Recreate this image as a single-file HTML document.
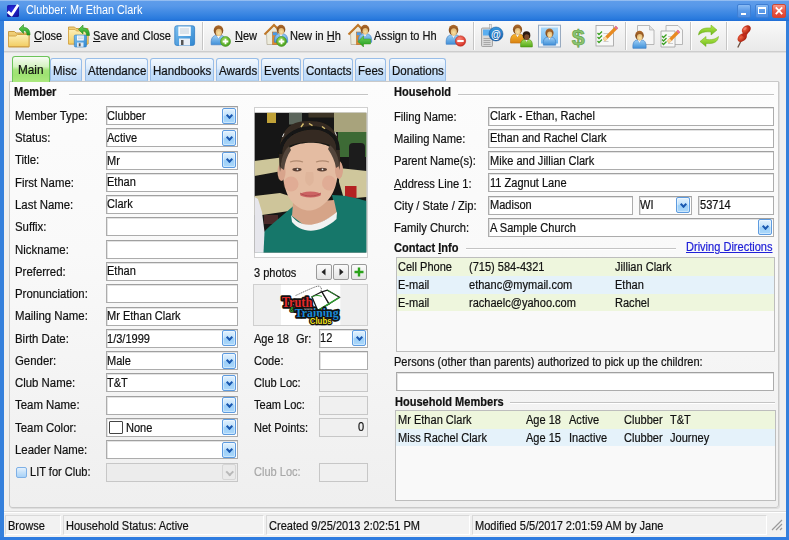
<!DOCTYPE html><html><head><meta charset="utf-8"><style>
*{margin:0;padding:0;box-sizing:border-box}
html,body{width:789px;height:540px;overflow:hidden;background:#f0f0f0}
body{position:relative;font-family:"Liberation Sans", sans-serif;font-size:12px;color:#111}
.t{position:absolute;line-height:12px;white-space:pre;transform:scaleX(.92);transform-origin:0 0;-webkit-text-stroke:0.2px currentColor}
.b{font-weight:bold}
.box{position:absolute}
.inp{position:absolute;background:#fff;border:1px solid #acacac;border-top-color:#a0a0a0;box-shadow:inset 1px 1px 0 #e3e3e3}
.dis{position:absolute;background:#f0f0f0;border:1px solid #c7c7c7}
.dd{position:absolute;width:14px;height:16px;border:1px solid #5d9be0;border-radius:2px;background:linear-gradient(#e3f2fe,#c2e2fb 45%,#9ccff8 55%,#acd8fa);box-shadow:inset 0 0 0 1px rgba(255,255,255,.4)}
.dd:after{content:"";position:absolute;left:4px;top:4px;width:3px;height:3px;border:solid #1a58b0;border-width:0 2px 2px 0;transform:rotate(45deg)}
.ddd{position:absolute;width:14px;height:16px;border:1px solid #d6d6d6;border-radius:2px;background:#eaeaea}
.ddd:after{content:"";position:absolute;left:3.5px;top:3.5px;width:3.5px;height:3.5px;border:solid #b8b8b8;border-width:0 2px 2px 0;transform:rotate(45deg)}
.tab{position:absolute;top:57.5px;height:23.5px;border:1px solid #98bde8;border-bottom:1px solid #b0d0f0;border-radius:3px 3px 0 0;background:linear-gradient(#f4f9fe,#dcebfb 45%,#c8e0f9 55%,#bcd9f8)}
.sep{position:absolute;top:22px;width:2px;height:28px;border-left:1px solid #c5c5c5;border-right:1px solid #fff}
.grp{position:absolute;height:2px;background:#c4c4c4;border-bottom:1px solid #fff}
.sb{position:absolute;top:515px;height:20px;border:1px solid #d9d9d9;border-right-color:#fff;border-bottom-color:#fff;background:#f2f2f2}
.ul{text-decoration:underline}
</style></head><body>

<div class="box" style="left:0;top:0;width:789px;height:21px;background:linear-gradient(#b8d4f6 0,#5e9cea 1.2px,#5798e9 6px,#3e88e3 13px,#2879dd 19px,#1f6cd4 21px)"></div>
<div class="box" style="left:0;top:21px;width:4px;height:519px;background:#3580dc"></div>
<div class="box" style="left:786px;top:21px;width:3px;height:519px;background:#3580dc"></div>
<div class="box" style="left:0;top:537px;width:789px;height:3px;background:#2f7ce0"></div>
<div class="box" style="left:7px;top:5px;width:11.5px;height:11.5px;background:radial-gradient(circle at 45% 40%,#2a2ee8,#1a1ab0 60%,#0e1080);border-radius:1.5px"></div>
<svg class="box" style="left:5px;top:3px" width="16" height="16"><path d="M2.8 8.6 L6.5 12 L13.2 1.8" stroke="#fff" stroke-width="2.8" fill="none" stroke-linejoin="round"/></svg>
<div class="t" style="left:25.5px;top:4.3px;color:#fff;font-size:12.2px;transform:scaleX(.89);-webkit-text-stroke:0">Clubber: Mr Ethan Clark</div>
<div class="box" style="left:737px;top:4px;width:14px;height:14px;border:1px solid #3f7fd4;border-radius:2px;background:linear-gradient(#8cbcf4,#5a9ae8 50%,#4a8ce4)"></div>
<div class="box" style="left:741px;top:13px;width:5px;height:2px;background:#fff"></div>
<div class="box" style="left:755px;top:4px;width:14px;height:14px;border:1px solid #3f7fd4;border-radius:2px;background:linear-gradient(#8cbcf4,#5a9ae8 50%,#4a8ce4)"></div>
<div class="box" style="left:758px;top:7px;width:8px;height:7px;border:1px solid #fff;border-top-width:2px"></div>
<div class="box" style="left:772px;top:4px;width:14px;height:14px;border:1px solid #c84a3a;border-radius:2px;background:linear-gradient(#f89888,#e85848 50%,#e04030)"></div>
<svg class="box" style="left:772px;top:4px" width="14" height="14"><path d="M3.8 3.3 L10.2 10.2 M10.2 3.3 L3.8 10.2" stroke="#fff" stroke-width="1.8"/></svg>
<div class="box" style="left:4px;top:21px;width:782px;height:30px;background:linear-gradient(#f9f9f9,#e9e9e9)"></div>
<div class="box" style="left:4px;top:51px;width:782px;height:2px;background:#cdcdcd;border-bottom:1px solid #e0e0e0"></div>
<div class="sep" style="left:202px"></div>
<div class="sep" style="left:473px"></div>
<div class="sep" style="left:625px"></div>
<div class="sep" style="left:690px"></div>
<div class="sep" style="left:726px"></div>
<svg width="0" height="0" style="position:absolute"><defs>
<linearGradient id="gFold" x1="0" y1="0" x2="0" y2="1"><stop offset="0" stop-color="#fdf0b8"/><stop offset="1" stop-color="#f2cd62"/></linearGradient>
<linearGradient id="gFoldB" x1="0" y1="0" x2="0" y2="1"><stop offset="0" stop-color="#f2d27c"/><stop offset="1" stop-color="#dcae4c"/></linearGradient>
<linearGradient id="gArrow" x1="0" y1="0" x2="0" y2="1"><stop offset="0" stop-color="#6fd35a"/><stop offset="1" stop-color="#1f9a1f"/></linearGradient>
<linearGradient id="gBlue" x1="0" y1="0" x2="0" y2="1"><stop offset="0" stop-color="#9fd0f6"/><stop offset="1" stop-color="#3f8fd8"/></linearGradient>
<linearGradient id="gFloppy" x1="0" y1="0" x2="1" y2="1"><stop offset="0" stop-color="#7cc0f0"/><stop offset="1" stop-color="#2f86d0"/></linearGradient>
<radialGradient id="gGreenC" cx="0.4" cy="0.35" r="0.7"><stop offset="0" stop-color="#a6e060"/><stop offset="1" stop-color="#3e9a16"/></radialGradient>
<radialGradient id="gRedC" cx="0.4" cy="0.35" r="0.7"><stop offset="0" stop-color="#ff8a7a"/><stop offset="1" stop-color="#d02a20"/></radialGradient>
<radialGradient id="gFace" cx="0.5" cy="0.6" r="0.6"><stop offset="0" stop-color="#f8e2a4"/><stop offset="1" stop-color="#e2b470"/></radialGradient>
<linearGradient id="gHair" x1="0" y1="0" x2="0" y2="1"><stop offset="0" stop-color="#b06a2a"/><stop offset="1" stop-color="#6a3e18"/></linearGradient>
<linearGradient id="gOrange" x1="0" y1="0" x2="0" y2="1"><stop offset="0" stop-color="#f8b830"/><stop offset="1" stop-color="#d88010"/></linearGradient>
<linearGradient id="gGreen" x1="0" y1="0" x2="0" y2="1"><stop offset="0" stop-color="#a8e060"/><stop offset="1" stop-color="#52a818"/></linearGradient>
<linearGradient id="gRefresh" x1="0" y1="0" x2="0" y2="1"><stop offset="0" stop-color="#b8ec50"/><stop offset="1" stop-color="#6cb818"/></linearGradient>
<radialGradient id="gPin" cx="0.4" cy="0.35" r="0.7"><stop offset="0" stop-color="#f06040"/><stop offset="1" stop-color="#a01808"/></radialGradient>
<linearGradient id="gPhoto" x1="0" y1="0" x2="0" y2="1"><stop offset="0" stop-color="#a8d8fa"/><stop offset="1" stop-color="#6ab4f0"/></linearGradient>
<linearGradient id="gAt" x1="0" y1="0" x2="0" y2="1"><stop offset="0" stop-color="#3a9ae0"/><stop offset="1" stop-color="#0d5aa8"/></linearGradient>
</defs></svg>
<svg class="box" style="left:0px;top:0px;overflow:visible" width="789" height="60" viewBox="0 0 789 60"><path d="M8.5 31.5 h6 l1.5 1.5 h13 v14 h-20.5z" fill="url(#gFoldB)" stroke="#c89a40" stroke-width="1"/>
<path d="M8.5 36 h7 l2 -1.5 h11.5 v12 h-20.5z" fill="url(#gFold)" stroke="#d4a448" stroke-width="1"/><path d="M30 35 C30 29 27 27.5 23.5 27.5 L23.5 24.5 L19 29 L23.5 33.5 L23.5 30.5 C26 30.5 27 32 27 35z" fill="url(#gArrow)" stroke="#2a8a20" stroke-width="0.6"/></svg>
<svg class="box" style="left:0px;top:0px;overflow:visible" width="789" height="60" viewBox="0 0 789 60"><path d="M68.5 27 h6 l1.5 1.5 h12 v15.5 h-19.5z" fill="url(#gFoldB)" stroke="#c89a40" stroke-width="0.9"/>
<path d="M68.5 29.5 h6.5 l1.5 1.5 h11.5 v13 h-19.5z" fill="url(#gFold)" stroke="#d4a448" stroke-width="0.8"/>
<rect x="74.3" y="35" width="12.2" height="12" rx="1.3" fill="url(#gFloppy)" stroke="#2a78c0" stroke-width="0.6"/>
<rect x="77" y="35.5" width="6.8" height="5" fill="#f4f8fc"/>
<path d="M78 37 h5 M78 38.7 h5" stroke="#b0c0d0" stroke-width="0.6"/>
<rect x="77" y="42.5" width="6.5" height="4.3" fill="#dfe9f4"/><rect x="78.8" y="43.3" width="1.8" height="3" fill="#555"/><path d="M89.5 35.5 C89.5 29.5 86.5 28.0 83.0 28.0 L83.0 25.0 L78.5 29.5 L83.0 34.0 L83.0 31.0 C85.5 31.0 86.5 32.5 86.5 35.5z" fill="url(#gArrow)" stroke="#2a8a20" stroke-width="0.6"/></svg>
<svg class="box" style="left:0px;top:0px;overflow:visible" width="789" height="60" viewBox="0 0 789 60"><rect x="174.8" y="25.8" width="19.8" height="19.6" rx="2" fill="url(#gFloppy)" stroke="#2f7cc4" stroke-width="0.8"/>
<rect x="178.3" y="26.5" width="12.5" height="9.5" fill="#f6f9fc"/>
<path d="M180 29 h9 M180 31 h9 M180 33 h9" stroke="#b8c4d0" stroke-width="0.8"/>
<rect x="179" y="38.5" width="11" height="7" fill="#e8eef6"/><rect x="181" y="40" width="2.5" height="5" fill="#555"/></svg>
<svg class="box" style="left:0px;top:0px;overflow:visible" width="789" height="60" viewBox="0 0 789 60"><path d="M211.2 44.8 C210.5 37.5 213.5 35.5 216.5 35.3 L218.5 38.5 L220.5 35.3 C223.5 35.5 226.5 37.5 225.8 44.8z" fill="url(#gBlue)" stroke="#3a78c0" stroke-width="0.6"/>
<path d="M216.5 35.3 L218.5 38.7 L220.5 35.3z" fill="#f4f4f4"/>
<ellipse cx="218.5" cy="30.5" rx="4.8" ry="5.2" fill="url(#gHair)"/>
<ellipse cx="218.8" cy="32.4" rx="3.1" ry="3.6" fill="url(#gFace)"/><circle cx="225.5" cy="41.5" r="5" fill="url(#gGreenC)" stroke="#3a8a10" stroke-width="0.5"/>
<path d="M225.5 38.7 V44.3 M222.7 41.5 H228.3" stroke="#fff" stroke-width="1.8"/></svg>
<svg class="box" style="left:0px;top:0px;overflow:visible" width="789" height="60" viewBox="0 0 789 60"><path d="M266.5 33.5 L274.0 26.0 L279.5 31.5 V44.5 H267.0z" fill="#ecebdc" stroke="#b0a890" stroke-width="0.7"/>
<path d="M264.5 34.5 L274.0 25.0 L280.5 31.5" fill="none" stroke="#c07828" stroke-width="2"/>
<rect x="272.5" y="32.0" width="5" height="12.5" fill="#e08a2a" stroke="#b06018" stroke-width="0.5"/>
<rect x="272.8" y="32.3" width="4.4" height="3" fill="#4a9ae8"/><path d="M274.43 42.370000000000005 C273.8 35.8 276.5 34.0 279.2 33.82 L281 36.7 L282.8 33.82 C285.5 34.0 288.2 35.8 287.57 42.370000000000005z" fill="url(#gBlue)" stroke="#3a78c0" stroke-width="0.6"/>
<path d="M279.2 33.82 L281 36.88 L282.8 33.82z" fill="#f4f4f4"/>
<ellipse cx="281" cy="29.5" rx="4.32" ry="4.680000000000001" fill="url(#gHair)"/>
<ellipse cx="281.27" cy="31.21" rx="2.79" ry="3.24" fill="url(#gFace)"/><circle cx="281.5" cy="41.5" r="5" fill="url(#gGreenC)" stroke="#3a8a10" stroke-width="0.5"/>
<path d="M281.5 38.7 V44.3 M278.7 41.5 H284.3" stroke="#fff" stroke-width="1.8"/></svg>
<svg class="box" style="left:0px;top:0px;overflow:visible" width="789" height="60" viewBox="0 0 789 60"><path d="M350.5 33.5 L358.0 26.0 L363.5 31.5 V44.5 H351.0z" fill="#ecebdc" stroke="#b0a890" stroke-width="0.7"/>
<path d="M348.5 34.5 L358.0 25.0 L364.5 31.5" fill="none" stroke="#c07828" stroke-width="2"/>
<rect x="356.5" y="32.0" width="5" height="12.5" fill="#e08a2a" stroke="#b06018" stroke-width="0.5"/>
<rect x="356.8" y="32.3" width="4.4" height="3" fill="#4a9ae8"/><path d="M358.43 42.370000000000005 C357.8 35.8 360.5 34.0 363.2 33.82 L365 36.7 L366.8 33.82 C369.5 34.0 372.2 35.8 371.57 42.370000000000005z" fill="url(#gBlue)" stroke="#3a78c0" stroke-width="0.6"/>
<path d="M363.2 33.82 L365 36.88 L366.8 33.82z" fill="#f4f4f4"/>
<ellipse cx="365" cy="29.5" rx="4.32" ry="4.680000000000001" fill="url(#gHair)"/>
<ellipse cx="365.27" cy="31.21" rx="2.79" ry="3.24" fill="url(#gFace)"/>
<path d="M358 41.5 L363.5 36 V39 H370.5 V44 H363.5 V47z" fill="url(#gArrow)" stroke="#3a9a10" stroke-width="0.5"/></svg>
<svg class="box" style="left:0px;top:0px;overflow:visible" width="789" height="60" viewBox="0 0 789 60"><path d="M446.2 44.3 C445.5 37.0 448.5 35.0 451.5 34.8 L453.5 38.0 L455.5 34.8 C458.5 35.0 461.5 37.0 460.8 44.3z" fill="url(#gBlue)" stroke="#3a78c0" stroke-width="0.6"/>
<path d="M451.5 34.8 L453.5 38.2 L455.5 34.8z" fill="#f4f4f4"/>
<ellipse cx="453.5" cy="30" rx="4.8" ry="5.2" fill="url(#gHair)"/>
<ellipse cx="453.8" cy="31.9" rx="3.1" ry="3.6" fill="url(#gFace)"/><circle cx="460.5" cy="41" r="5.2" fill="url(#gRedC)" stroke="#b02010" stroke-width="0.5"/><rect x="457.3" y="40" width="6.4" height="2" fill="#fff"/></svg>
<svg class="box" style="left:0px;top:0px;overflow:visible" width="789" height="60" viewBox="0 0 789 60"><rect x="481.5" y="28" width="11" height="18.5" rx="1" fill="#d8d8d8" stroke="#8a8a8a" stroke-width="0.7"/>
<rect x="489.5" y="24.5" width="2" height="4" fill="#e8e8e8" stroke="#999" stroke-width="0.5"/>
<rect x="483" y="29.5" width="8" height="6" fill="#5aaef0"/>
<path d="M483.5 38.5 h7 M483.5 40.5 h7 M483.5 42.5 h7 M483.5 44.5 h7" stroke="#a8a8a8" stroke-width="1"/>
<circle cx="496" cy="34" r="7" fill="url(#gAt)" stroke="#0a4a90" stroke-width="0.5"/>
<text x="496" y="37.6" font-family="Liberation Sans" font-weight="bold" font-size="10" fill="#fff" text-anchor="middle">@</text></svg>
<svg class="box" style="left:0px;top:0px;overflow:visible" width="789" height="60" viewBox="0 0 789 60"><path d="M510.565 43.085 C509.9 36.15 512.75 34.25 515.6 34.06 L517.5 37.1 L519.4 34.06 C522.25 34.25 525.1 36.15 524.435 43.085z" fill="url(#gOrange)" stroke="#c07010" stroke-width="0.6"/>
<path d="M515.6 34.06 L517.5 37.29 L519.4 34.06z" fill="#f4f4f4"/>
<ellipse cx="517.5" cy="29.5" rx="4.56" ry="4.9399999999999995" fill="url(#gHair)"/>
<ellipse cx="517.785" cy="31.305" rx="2.945" ry="3.42" fill="url(#gFace)"/><path d="M520.66 46.94 C520.1 41.1 522.5 39.5 524.9 39.34 L526.5 41.9 L528.1 39.34 C530.5 39.5 532.9 41.1 532.34 46.94z" fill="url(#gGreen)" stroke="#4a9010" stroke-width="0.6"/>
<path d="M524.9 39.34 L526.5 42.06 L528.1 39.34z" fill="#f4f4f4"/>
<ellipse cx="526.5" cy="35.5" rx="3.84" ry="4.16" fill="#2a1a10"/>
<ellipse cx="526.74" cy="37.02" rx="2.4800000000000004" ry="2.8800000000000003" fill="#7a4a2a"/></svg>
<svg class="box" style="left:0px;top:0px;overflow:visible" width="789" height="60" viewBox="0 0 789 60"><rect x="538.5" y="25.2" width="22" height="21.8" fill="#eef4fa" stroke="#98aac0" stroke-width="1"/>
<rect x="541" y="27.5" width="17" height="16" fill="url(#gPhoto)"/><path d="M543.295 45.155 C542.7 38.95 545.25 37.25 547.8 37.08 L549.5 39.8 L551.2 37.08 C553.75 37.25 556.3 38.95 555.705 45.155z" fill="url(#gBlue)" stroke="#3a78c0" stroke-width="0.6"/>
<path d="M547.8 37.08 L549.5 39.97 L551.2 37.08z" fill="#f4f4f4"/>
<ellipse cx="549.5" cy="33" rx="4.08" ry="4.42" fill="url(#gHair)"/>
<ellipse cx="549.755" cy="34.615" rx="2.635" ry="3.06" fill="url(#gFace)"/></svg>
<svg class="box" style="left:0px;top:0px;overflow:visible" width="789" height="60" viewBox="0 0 789 60"><text x="578.3" y="44.5" font-family="Liberation Sans" font-weight="bold" font-size="22" fill="#8cc470" stroke="#5a9a40" stroke-width="0.6" text-anchor="middle" textLength="13" lengthAdjust="spacingAndGlyphs">$</text></svg>
<svg class="box" style="left:0px;top:0px;overflow:visible" width="789" height="60" viewBox="0 0 789 60"><rect x="596" y="25.5" width="17.5" height="20.5" fill="#f8f8f8" stroke="#a0a0a0" stroke-width="0.8"/><path d="M597.5 33 l1.5 1.5 l3 -3" stroke="#3aa020" stroke-width="1.3" fill="none"/><path d="M603.5 33.5 h5" stroke="#c0c0c0" stroke-width="0.8"/><path d="M597.5 37 l1.5 1.5 l3 -3" stroke="#3aa020" stroke-width="1.3" fill="none"/><path d="M603.5 37.5 h5" stroke="#c0c0c0" stroke-width="0.8"/><path d="M597.5 41 l1.5 1.5 l3 -3" stroke="#3aa020" stroke-width="1.3" fill="none"/><path d="M603.5 41.5 h5" stroke="#c0c0c0" stroke-width="0.8"/><path d="M604 40 L617 27" stroke="#e88a20" stroke-width="3.2"/><path d="M604 40 L606.5 37.5" stroke="#f8d8a0" stroke-width="3.2"/><path d="M615.5 28.5 L617 27" stroke="#e070a0" stroke-width="3.2"/></svg>
<svg class="box" style="left:0px;top:0px;overflow:visible" width="789" height="60" viewBox="0 0 789 60"><path d="M637.5 25.5 H649.5 L654 30 V44.5 H637.5z" fill="#f6f6f6" stroke="#a8a8a8" stroke-width="0.8"/><path d="M649.5 25.5 V30 H654" fill="#e0e0e0" stroke="#a8a8a8" stroke-width="0.6"/><path d="M632.93 48.370000000000005 C632.3 41.8 635.0 40.0 637.7 39.82 L639.5 42.7 L641.3 39.82 C644.0 40.0 646.7 41.8 646.07 48.370000000000005z" fill="url(#gBlue)" stroke="#3a78c0" stroke-width="0.6"/>
<path d="M637.7 39.82 L639.5 42.88 L641.3 39.82z" fill="#f4f4f4"/>
<ellipse cx="639.5" cy="35.5" rx="4.32" ry="4.680000000000001" fill="url(#gHair)"/>
<ellipse cx="639.77" cy="37.21" rx="2.79" ry="3.24" fill="url(#gFace)"/></svg>
<svg class="box" style="left:0px;top:0px;overflow:visible" width="789" height="60" viewBox="0 0 789 60"><path d="M666 25.5 H678 L682.5 30 V44.5 H666z" fill="#f6f6f6" stroke="#a8a8a8" stroke-width="0.8"/><path d="M661 31 H675 V47 H661z" fill="#f8f8f8" stroke="#a0a0a0" stroke-width="0.8"/><path d="M662 36.0 l1.5 1.5 l3 -3" stroke="#3aa020" stroke-width="1.3" fill="none"/><path d="M668 36.5 h5" stroke="#c0c0c0" stroke-width="0.8"/><path d="M662 39.5 l1.5 1.5 l3 -3" stroke="#3aa020" stroke-width="1.3" fill="none"/><path d="M668 40.0 h5" stroke="#c0c0c0" stroke-width="0.8"/><path d="M662 43.0 l1.5 1.5 l3 -3" stroke="#3aa020" stroke-width="1.3" fill="none"/><path d="M668 43.5 h5" stroke="#c0c0c0" stroke-width="0.8"/><path d="M668 42 L679 31" stroke="#e88a20" stroke-width="3.2"/><path d="M668 42 L670.5 39.5" stroke="#f8d8a0" stroke-width="3.2"/><path d="M677.5 32.5 L679 31" stroke="#e070a0" stroke-width="3.2"/></svg>
<svg class="box" style="left:0px;top:0px;overflow:visible" width="789" height="60" viewBox="0 0 789 60"><path d="M698.5 35 C699 29 704 27.5 711 28 V25 L717 30 L711 35 V32 C705.5 31.5 702 32 698.5 35z" fill="url(#gRefresh)" stroke="#6aa818" stroke-width="0.5"/>
<path d="M718.5 36.5 C718 42.5 713 44 706 43.5 V46.5 L700 41.5 L706 36.5 V39.5 C711.5 40 715 39.5 718.5 36.5z" fill="url(#gRefresh)" stroke="#6aa818" stroke-width="0.5"/></svg>
<svg class="box" style="left:0px;top:0px;overflow:visible" width="789" height="60" viewBox="0 0 789 60"><path d="M741 41 L737.8 47.5" stroke="#6a5040" stroke-width="1.3"/>
<ellipse cx="742.2" cy="37.6" rx="5.3" ry="3.6" transform="rotate(-40 742.2 37.6)" fill="url(#gPin)"/>
<path d="M741.5 35 L745 31 L748 33.5 L744.5 37.5z" fill="#c02818"/>
<ellipse cx="746.3" cy="29.6" rx="5" ry="3.7" transform="rotate(-40 746.3 29.6)" fill="url(#gPin)"/>
<ellipse cx="745" cy="28.6" rx="2" ry="1.2" transform="rotate(-40 745 28.6)" fill="#f89080" opacity="0.7"/></svg>
<div class="t" style="left:33.7px;top:30.0px;"><span class="ul">C</span>lose</div>
<div class="t" style="left:93.0px;top:30.0px;"><span class="ul">S</span>ave and Close</div>
<div class="t" style="left:234.8px;top:30.0px;"><span class="ul">N</span>ew</div>
<div class="t" style="left:290.2px;top:30.0px;">New in <span class="ul">H</span>h</div>
<div class="t" style="left:374.2px;top:30.0px;">Assign to Hh</div>
<div class="tab" style="left:49.6px;width:32.6px"></div>
<div class="t" style="left:52.6px;top:65.0px;transform:scaleX(.96)">Misc</div>
<div class="tab" style="left:84.5px;width:63.3px"></div>
<div class="t" style="left:87.5px;top:65.0px;transform:scaleX(.96)">Attendance</div>
<div class="tab" style="left:150.0px;width:63.7px"></div>
<div class="t" style="left:153.0px;top:65.0px;transform:scaleX(.96)">Handbooks</div>
<div class="tab" style="left:215.7px;width:43.3px"></div>
<div class="t" style="left:218.7px;top:65.0px;transform:scaleX(.96)">Awards</div>
<div class="tab" style="left:261.3px;width:39.3px"></div>
<div class="t" style="left:264.3px;top:65.0px;transform:scaleX(.96)">Events</div>
<div class="tab" style="left:303.0px;width:50.4px"></div>
<div class="t" style="left:306.0px;top:65.0px;transform:scaleX(.96)">Contacts</div>
<div class="tab" style="left:355.4px;width:30.8px"></div>
<div class="t" style="left:358.4px;top:65.0px;transform:scaleX(.96)">Fees</div>
<div class="tab" style="left:388.6px;width:57.4px"></div>
<div class="t" style="left:391.6px;top:65.0px;transform:scaleX(.96)">Donations</div>
<div class="box" style="left:8.5px;top:80.5px;width:770px;height:427px;border:1px solid #c9c9c9;border-radius:0 0 3px 3px;box-shadow:1px 1px 0 #dedede;background:linear-gradient(#fcfcfc,#f9f9f9 40%,#efefef)"></div>
<div class="box" style="left:12px;top:56px;width:38px;height:26px;border:1px solid #6cc45a;border-bottom:none;border-radius:3px 3px 0 0;background:linear-gradient(#f7fcf3,#d6f3c2 38%,#a4e47a 52%,#9ee272 72%,#ace97f)"></div>
<div class="t" style="left:17.8px;top:64.2px;transform:scaleX(.98)">Main</div>
<div class="box" style="left:4px;top:511px;width:782px;height:2px;background:#dadada;border-bottom:1px solid #fff"></div>
<div class="sb" style="left:5px;width:56.0px"></div>
<div class="t" style="left:8.0px;top:520.2px;">Browse</div>
<div class="sb" style="left:63px;width:201.4px"></div>
<div class="t" style="left:66.0px;top:520.2px;">Household Status: Active</div>
<div class="sb" style="left:266px;width:204.0px"></div>
<div class="t" style="left:269.0px;top:520.2px;">Created 9/25/2013 2:02:51 PM</div>
<div class="sb" style="left:472px;width:295.3px"></div>
<div class="t" style="left:475.0px;top:520.2px;">Modified 5/5/2017 2:01:59 AM by Jane</div>
<svg class="box" style="left:770px;top:518px" width="14" height="14"><path d="M2 12 L12 2 M6 12 L12 6 M10 12 L12 10" stroke="#9a9a9a" stroke-width="1.2"/></svg>
<div class="t b" style="left:14.4px;top:86.4px;">Member</div>
<div class="grp" style="left:69px;top:93.5px;width:298.5px"></div>
<div class="t b" style="left:394.0px;top:86.4px;">Household</div>
<div class="grp" style="left:458px;top:93.5px;width:316px"></div>
<div class="t" style="left:14.8px;top:109.8px;transform:scaleX(.95)">Member Type:</div>
<div class="inp" style="left:106px;top:106.0px;width:132px;height:19px"></div>
<div class="t" style="left:107.2px;top:109.9px;">Clubber</div>
<div class="dd" style="left:222.3px;top:107.5px"></div>
<div class="t" style="left:14.8px;top:132.1px;transform:scaleX(.95)">Status:</div>
<div class="inp" style="left:106px;top:128.3px;width:132px;height:19px"></div>
<div class="t" style="left:107.2px;top:132.2px;">Active</div>
<div class="dd" style="left:222.3px;top:129.8px"></div>
<div class="t" style="left:14.8px;top:154.4px;transform:scaleX(.95)">Title:</div>
<div class="inp" style="left:106px;top:150.6px;width:132px;height:19px"></div>
<div class="t" style="left:107.2px;top:154.5px;">Mr</div>
<div class="dd" style="left:222.3px;top:152.1px"></div>
<div class="t" style="left:14.8px;top:176.6px;transform:scaleX(.95)">First Name:</div>
<div class="inp" style="left:106px;top:172.8px;width:132px;height:19px"></div>
<div class="t" style="left:107.2px;top:176.0px;">Ethan</div>
<div class="t" style="left:14.8px;top:198.9px;transform:scaleX(.95)">Last Name:</div>
<div class="inp" style="left:106px;top:195.1px;width:132px;height:19px"></div>
<div class="t" style="left:107.2px;top:198.3px;">Clark</div>
<div class="t" style="left:14.8px;top:221.2px;transform:scaleX(.95)">Suffix:</div>
<div class="inp" style="left:106px;top:217.4px;width:132px;height:19px"></div>
<div class="t" style="left:14.8px;top:243.5px;transform:scaleX(.95)">Nickname:</div>
<div class="inp" style="left:106px;top:239.7px;width:132px;height:19px"></div>
<div class="t" style="left:14.8px;top:265.8px;transform:scaleX(.95)">Preferred:</div>
<div class="inp" style="left:106px;top:262.0px;width:132px;height:19px"></div>
<div class="t" style="left:107.2px;top:265.2px;">Ethan</div>
<div class="t" style="left:14.8px;top:288.0px;transform:scaleX(.95)">Pronunciation:</div>
<div class="inp" style="left:106px;top:284.2px;width:132px;height:19px"></div>
<div class="t" style="left:14.8px;top:310.3px;transform:scaleX(.95)">Mailing Name:</div>
<div class="inp" style="left:106px;top:306.5px;width:132px;height:19px"></div>
<div class="t" style="left:107.2px;top:309.7px;">Mr Ethan Clark</div>
<div class="t" style="left:14.8px;top:332.6px;transform:scaleX(.95)">Birth Date:</div>
<div class="inp" style="left:106px;top:328.8px;width:132px;height:19px"></div>
<div class="t" style="left:107.2px;top:332.7px;">1/3/1999</div>
<div class="dd" style="left:222.3px;top:330.3px"></div>
<div class="t" style="left:14.8px;top:354.9px;transform:scaleX(.95)">Gender:</div>
<div class="inp" style="left:106px;top:351.1px;width:132px;height:19px"></div>
<div class="t" style="left:107.2px;top:355.0px;">Male</div>
<div class="dd" style="left:222.3px;top:352.6px"></div>
<div class="t" style="left:14.8px;top:377.2px;transform:scaleX(.95)">Club Name:</div>
<div class="inp" style="left:106px;top:373.4px;width:132px;height:19px"></div>
<div class="t" style="left:107.2px;top:377.3px;">T&amp;T</div>
<div class="dd" style="left:222.3px;top:374.9px"></div>
<div class="t" style="left:14.8px;top:399.4px;transform:scaleX(.95)">Team Name:</div>
<div class="inp" style="left:106px;top:395.6px;width:132px;height:19px"></div>
<div class="dd" style="left:222.3px;top:397.1px"></div>
<div class="t" style="left:14.8px;top:421.7px;transform:scaleX(.95)">Team Color:</div>
<div class="inp" style="left:106px;top:417.9px;width:132px;height:19px"></div>
<div class="box" style="left:109px;top:420.9px;width:14px;height:13px;border:1.5px solid #444;background:#fff;border-radius:1px"></div>
<div class="t" style="left:126.2px;top:421.8px;">None</div>
<div class="dd" style="left:222.3px;top:419.4px"></div>
<div class="t" style="left:14.8px;top:444.0px;transform:scaleX(.95)">Leader Name:</div>
<div class="inp" style="left:106px;top:440.2px;width:132px;height:19px"></div>
<div class="dd" style="left:222.3px;top:441.7px"></div>
<div class="box" style="left:16px;top:466.8px;width:11px;height:11px;border:1px solid #7eb0e6;border-radius:2px;background:linear-gradient(#e4f0fc,#c4e0f9 50%,#a8d2f7)"></div>
<div class="t" style="left:30.2px;top:466.3px;">LIT for Club:</div>
<div class="dis" style="left:106px;top:462.5px;width:132px;height:19px;background:#ececec"></div>
<div class="ddd" style="left:222.3px;top:464.0px"></div>
<div class="inp" style="left:253.5px;top:107.4px;width:114px;height:151px;box-shadow:none;border-color:#d0d0d0"></div>
<svg class="box" style="left:250px;top:108px" width="120" height="150" viewBox="250 108 120 150"><defs><filter id="blr" x="0" y="0" width="1" height="1"><feGaussianBlur stdDeviation="0.55"/></filter><clipPath id="pc"><rect x="254.5" y="112.5" width="112.1" height="140.3"/></clipPath></defs><g clip-path="url(#pc)"><g filter="url(#blr)"><rect x="254.5" y="112.5" width="112.1" height="140.3" fill="#161612"/>
<rect x="267" y="112.5" width="9" height="10.5" fill="#c0a238"/>
<rect x="289" y="112.5" width="13" height="12" fill="#5c665c"/>
<rect x="308.5" y="112.5" width="26" height="5" fill="#3c3428"/>
<rect x="334" y="112.5" width="32.6" height="19.5" fill="#a8a37c"/>
<rect x="338" y="132" width="28.6" height="25" fill="#3e6a36"/>
<rect x="349" y="143" width="16" height="32" rx="4" fill="#1e1e1e"/>
<path d="M254.5 161 L281 157.5 L282 171 L254.5 176z" fill="#cdc69a"/>
<path d="M339 168 L366.6 171 L366.6 197 L344 199 L339 182z" fill="#cfc79c"/>
<rect x="345" y="186" width="11.5" height="12" fill="#b42020"/>
<path d="M254.5 196 L280 193 L296 198 L296 210 L262 215 L254.5 215z" fill="#cec59a"/>
<rect x="264" y="215" width="14" height="9" fill="#4a2a2a"/>
<path d="M257.6 252.8 L259 245 C261 236 264 231 270 226 L294 205.5 L296 214 C300 224 316 232 336 214 L332 195 C345 195 356 198 366.6 201 L366.6 252.8z" fill="#17776a"/>
<path d="M254.5 197 L258 199 L262 212 L264.5 232 L263.5 252.8 L254.5 252.8z" fill="#e6e6ec"/>
<path d="M293 203 L334 200 L337 214 L309 229 L292 216z" fill="#d6a488"/>
<path d="M291 215 C298 225 312 232 337 212 L336.5 219 C318 236 300 232 292 222z" fill="#f2f2f2"/>
<path d="M282 160 C281 138 339 136 338 160 C339 182 334 196 324 204 C318 209 313 210.5 309 210.5 C304 210.5 298 208 293 203 C286 196 282 182 282 160z" fill="#e4bca2"/>
<ellipse cx="281.5" cy="172" rx="4" ry="9" fill="#d8a48c"/>
<ellipse cx="339" cy="170" rx="4" ry="9" fill="#d8a48c"/>
<ellipse cx="291" cy="184" rx="7.5" ry="7.5" fill="#d88474" opacity="0.28"/>
<ellipse cx="329" cy="183" rx="7" ry="7.5" fill="#d88474" opacity="0.28"/>
<path d="M280 172 C276 132 287 121 309 121 C332 121 343 132 339.5 170 C337.5 160 335 150 330 145 C320 141 300 141 289 146 C284 152 282 160 280 172z" fill="#362c22"/>
<path d="M281 168 C281 160 283 152 289 146 L291 150 C287 156 285 162 284 170z" fill="#52443a"/>
<path d="M339 166 C339 158 336 150 330 145 L328 149 C332 155 335 161 336 168z" fill="#52443a"/>
<path d="M280.5 154 C279.5 122 339 118 338 150" fill="none" stroke="#121212" stroke-width="3.4"/>
<path d="M301 127 l2.5 -3.5 M309 123.5 l3.5 2.2 M322 126.5 l3 2.2" stroke="#d8c070" stroke-width="1.4"/><path d="M282.5 137 l1.5 -3.5 M335 132 l1.5 3.5" stroke="#e0e0e0" stroke-width="1"/>
<path d="M290 162 C294 160.5 299 160.5 303 162 M316 162 C320 160.5 325 160.5 329 162" stroke="#b08a70" stroke-width="1.2" fill="none"/>
<ellipse cx="297" cy="169.6" rx="4.6" ry="1.8" fill="#5a4034"/>
<ellipse cx="322" cy="169.6" rx="5" ry="1.8" fill="#5a4034"/>
<circle cx="297.5" cy="169.3" r="0.9" fill="#f0f0f0"/><circle cx="322.5" cy="169.3" r="0.9" fill="#f0f0f0"/>
<path d="M306 172 C305 179 304 183 309.5 186 C315 183 314 179 313 172" fill="#cf9c84" opacity="0.2"/>
<ellipse cx="310.5" cy="194.5" rx="10.5" ry="3" fill="#cc6464"/>
<path d="M300 193 C305 197 316 197 321 193" stroke="#a84848" stroke-width="0.8" fill="none"/></g></g></svg>
<div class="t" style="left:254.2px;top:266.8px;">3 photos</div>
<div class="box" style="left:315.5px;top:264px;width:16px;height:16px;border:1px solid #9a9a9a;border-radius:2px;background:linear-gradient(#fbfbfb,#e4e4e4)"></div>
<div class="box" style="left:333px;top:264px;width:16px;height:16px;border:1px solid #9a9a9a;border-radius:2px;background:linear-gradient(#fbfbfb,#e4e4e4)"></div>
<div class="box" style="left:351px;top:264px;width:16px;height:16px;border:1px solid #9a9a9a;border-radius:2px;background:linear-gradient(#fbfbfb,#e4e4e4)"></div>
<svg class="box" style="left:315.5px;top:264px" width="16" height="16"><path d="M9.5 4.5 L5.5 8 L9.5 11.5Z" fill="#222"/></svg>
<svg class="box" style="left:333px;top:264px" width="16" height="16"><path d="M6.5 4.5 L10.5 8 L6.5 11.5Z" fill="#222"/></svg>
<svg class="box" style="left:351px;top:264px" width="16" height="16"><path d="M8 3.5 V12.5 M3.5 8 H12.5" stroke="#2aa21a" stroke-width="2.4"/></svg>
<div class="box" style="left:253.3px;top:284px;width:115px;height:41.5px;border:1px solid #cfcfcf;background:#efefef"></div>
<svg class="box" style="left:278px;top:283px" width="66" height="44" viewBox="0 0 789 526"><rect x="35" y="22" width="710" height="480" fill="#fff"/>
<path d="M210 150 C300 110 400 60 470 38 C520 30 540 80 490 125" fill="none" stroke="#333" stroke-width="8" stroke-dasharray="16 8"/>
<path d="M405 165 L525 105 L610 250 L475 330z" fill="#fff" stroke="#1a1a1a" stroke-width="15"/>
<path d="M525 105 L590 85 L735 170 L610 250z" fill="#fff" stroke="#1a1a1a" stroke-width="15"/>
<path d="M590 85 L700 150" stroke="#30a030" stroke-width="10"/>
<path d="M478 328 L735 172" stroke="#30a030" stroke-width="16"/>
<path d="M405 168 C440 148 490 148 525 160" fill="none" stroke="#30a030" stroke-width="12"/>
<text x="45" y="292" font-family="Liberation Serif" font-weight="bold" font-size="175" fill="#e42a2a" stroke="#111" stroke-width="42" paint-order="stroke" stroke-linejoin="round" textLength="365" lengthAdjust="spacingAndGlyphs">Truth</text>
<text x="140" y="352" font-family="Liberation Sans" font-weight="bold" font-size="80" fill="#30a030" stroke="#111" stroke-width="20" paint-order="stroke">&amp;</text>
<text x="200" y="412" font-family="Liberation Serif" font-weight="bold" font-size="160" fill="#1a8ad8" stroke="#111" stroke-width="42" paint-order="stroke" stroke-linejoin="round" textLength="525" lengthAdjust="spacingAndGlyphs">Training</text>
<text x="380" y="490" font-family="Liberation Sans" font-weight="bold" font-size="100" fill="#f4e41c" stroke="#111" stroke-width="30" paint-order="stroke" stroke-linejoin="round" textLength="260" lengthAdjust="spacingAndGlyphs">Clubs</text></svg>
<div class="t" style="left:253.5px;top:332.6px;">Age 18</div>
<div class="t" style="left:295.7px;top:332.6px;">Gr:</div>
<div class="inp" style="left:319px;top:328.8px;width:49px;height:19px"></div>
<div class="t" style="left:320.2px;top:332.0px;">12</div>
<div class="dd" style="left:352.3px;top:330.3px"></div>
<div class="t" style="left:253.5px;top:354.9px;">Code:</div>
<div class="inp" style="left:319px;top:351.1px;width:49px;height:19px"></div>
<div class="t" style="left:253.5px;top:377.2px;">Club Loc:</div>
<div class="dis" style="left:319px;top:373.4px;width:49px;height:19px"></div>
<div class="t" style="left:253.5px;top:399.4px;">Team Loc:</div>
<div class="dis" style="left:319px;top:395.6px;width:49px;height:19px"></div>
<div class="t" style="left:253.5px;top:421.7px;">Net Points:</div>
<div class="dis" style="left:319px;top:417.9px;width:49px;height:19px"></div>
<div class="t" style="left:357.7px;top:421.1px;">0</div>
<div class="t" style="left:253.5px;top:466.3px;color:#a8a8a8">Club Loc:</div>
<div class="dis" style="left:319px;top:462.5px;width:49px;height:19px"></div>
<div class="t" style="left:393.9px;top:110.8px;transform:scaleX(.93)">Filing Name:</div>
<div class="inp" style="left:488px;top:106.5px;width:286px;height:19px"></div>
<div class="t" style="left:489.7px;top:110.1px;">Clark - Ethan, Rachel</div>
<div class="t" style="left:393.9px;top:133.1px;transform:scaleX(.93)">Mailing Name:</div>
<div class="inp" style="left:488px;top:128.8px;width:286px;height:19px"></div>
<div class="t" style="left:489.7px;top:132.4px;">Ethan and Rachel Clark</div>
<div class="t" style="left:393.9px;top:155.4px;transform:scaleX(.93)">Parent Name(s):</div>
<div class="inp" style="left:488px;top:151.1px;width:286px;height:19px"></div>
<div class="t" style="left:489.7px;top:154.7px;">Mike and Jillian Clark</div>
<div class="t" style="left:393.9px;top:177.6px;transform:scaleX(.93)"><span class="ul">A</span>ddress Line 1:</div>
<div class="inp" style="left:488px;top:173.3px;width:286px;height:19px"></div>
<div class="t" style="left:489.7px;top:176.9px;">11 Zagnut Lane</div>
<div class="t" style="left:393.9px;top:199.9px;transform:scaleX(.93)">City / State / Zip:</div>
<div class="t" style="left:393.9px;top:222.2px;transform:scaleX(.93)">Family Church:</div>
<div class="inp" style="left:488px;top:195.6px;width:144.5px;height:19px"></div>
<div class="t" style="left:489.7px;top:199.2px;">Madison</div>
<div class="inp" style="left:638.5px;top:195.6px;width:53.5px;height:19px"></div>
<div class="t" style="left:640.2px;top:199.2px;">WI</div>
<div class="dd" style="left:676.3px;top:197.1px"></div>
<div class="inp" style="left:698px;top:195.6px;width:76px;height:19px"></div>
<div class="t" style="left:699.7px;top:199.2px;">53714</div>
<div class="inp" style="left:488px;top:217.9px;width:286px;height:19px"></div>
<div class="t" style="left:489.7px;top:221.5px;">A Sample Church</div>
<div class="dd" style="left:758.3px;top:219.4px"></div>
<div class="t b" style="left:393.8px;top:241.6px;">Contact <span class="ul">I</span>nfo</div>
<div class="grp" style="left:466px;top:248.3px;width:210px"></div>
<div class="t" style="left:685.6px;top:240.8px;color:#2020d8;text-decoration:underline;text-underline-offset:0.5px">Driving Directions</div>
<div class="box" style="left:395.5px;top:257px;width:379px;height:94.5px;border:1px solid #bdbdbd;background:#f9f9f9"></div>
<div class="box" style="left:396.5px;top:258.0px;width:377px;height:17.8px;background:#eef6dd"></div>
<div class="t" style="left:397.9px;top:261.0px;">Cell Phone</div>
<div class="t" style="left:469.0px;top:261.0px;">(715) 584-4321</div>
<div class="t" style="left:615.4px;top:261.0px;">Jillian Clark</div>
<div class="box" style="left:396.5px;top:275.8px;width:377px;height:17.8px;background:#e5f2fa"></div>
<div class="t" style="left:397.9px;top:278.8px;">E-mail</div>
<div class="t" style="left:469.0px;top:278.8px;">ethanc@mymail.com</div>
<div class="t" style="left:615.4px;top:278.8px;">Ethan</div>
<div class="box" style="left:396.5px;top:293.6px;width:377px;height:17.8px;background:#eef6dd"></div>
<div class="t" style="left:397.9px;top:296.6px;">E-mail</div>
<div class="t" style="left:469.0px;top:296.6px;">rachaelc@yahoo.com</div>
<div class="t" style="left:615.4px;top:296.6px;">Rachel</div>
<div class="t" style="left:394.2px;top:355.5px;">Persons (other than parents) authorized to pick up the children:</div>
<div class="inp" style="left:396px;top:372px;width:378px;height:19px"></div>
<div class="t b" style="left:394.5px;top:395.5px;">Household Members</div>
<div class="grp" style="left:509.7px;top:402px;width:265px"></div>
<div class="box" style="left:395.3px;top:410px;width:380.5px;height:90.5px;border:1px solid #bdbdbd;background:#f9f9f9"></div>
<div class="box" style="left:396.3px;top:411.0px;width:378.5px;height:17.6px;background:#eef6dd"></div>
<div class="t" style="left:398.2px;top:414.0px;">Mr Ethan Clark</div>
<div class="t" style="left:526.4px;top:414.0px;">Age 18</div>
<div class="t" style="left:569.4px;top:414.0px;">Active</div>
<div class="t" style="left:624.2px;top:414.0px;">Clubber</div>
<div class="t" style="left:670.4px;top:414.0px;">T&amp;T</div>
<div class="box" style="left:396.3px;top:428.6px;width:378.5px;height:17.6px;background:#e5f2fa"></div>
<div class="t" style="left:398.2px;top:431.6px;">Miss Rachel Clark</div>
<div class="t" style="left:526.4px;top:431.6px;">Age 15</div>
<div class="t" style="left:569.4px;top:431.6px;">Inactive</div>
<div class="t" style="left:624.2px;top:431.6px;">Clubber</div>
<div class="t" style="left:670.4px;top:431.6px;">Journey</div>
</body></html>
